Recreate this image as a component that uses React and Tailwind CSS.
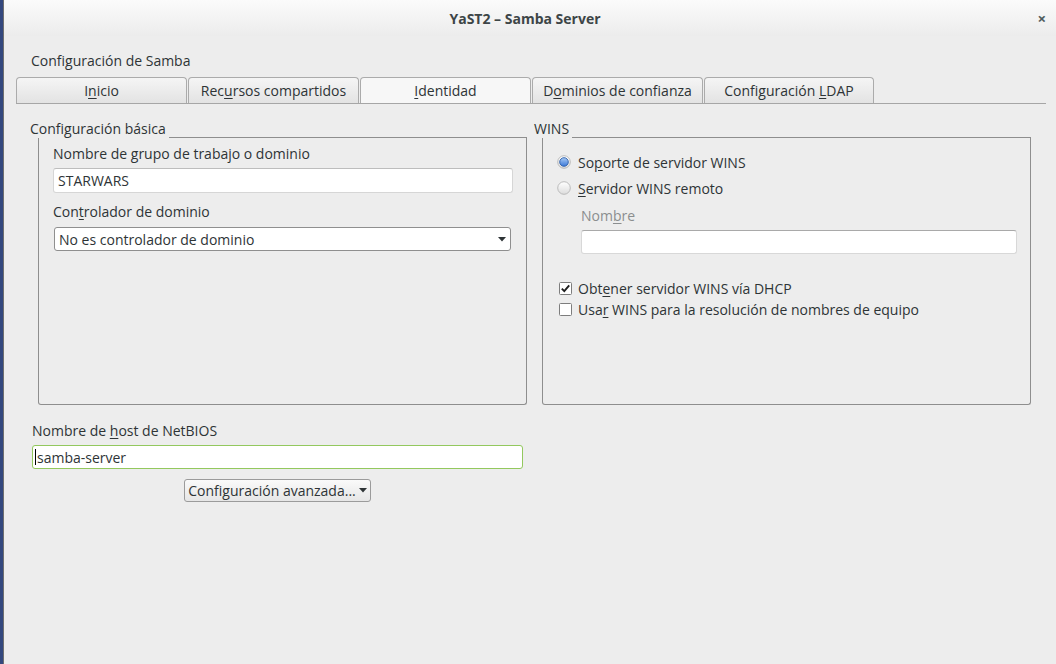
import React from 'react'

const font = { fontFamily: '"Open Sans", "Noto Sans", sans-serif' }

function Radio({ checked }) {
  return (
    <svg width="14" height="14" viewBox="0 0 14 14" className="shrink-0">
      <defs>
        <linearGradient id="rOff" x1="0" y1="0" x2="0" y2="1">
          <stop offset="0" stopColor="#ffffff" />
          <stop offset="1" stopColor="#dcdcdc" />
        </linearGradient>
        <linearGradient id="rOn" x1="0" y1="0" x2="0" y2="1">
          <stop offset="0" stopColor="#a9cbf5" />
          <stop offset="1" stopColor="#3b78d8" />
        </linearGradient>
      </defs>
      <circle cx="7" cy="7" r="6.3" fill="url(#rOff)" stroke="#b5b5b5" strokeWidth="0.9" />
      {checked && <circle cx="7" cy="7" r="4.3" fill="url(#rOn)" stroke="#2c5ea8" strokeWidth="0.9" />}
    </svg>
  )
}

function Check({ checked }) {
  return (
    <svg width="13" height="13" viewBox="0 0 13 13" className="shrink-0">
      <rect x="0.5" y="0.5" width="12" height="12" rx="1" fill="#ffffff" stroke="#7d7d7d" />
      {checked && <path d="M2.8 6.6 L5.3 9.1 L10.2 3.4" fill="none" stroke="#1e1e1e" strokeWidth="1.9" />}
    </svg>
  )
}

function Arrow() {
  return (
    <svg width="8" height="5" viewBox="0 0 8 5" className="shrink-0">
      <path d="M0 0 H8 L4 4.5 Z" fill="#2e3436" />
    </svg>
  )
}

function Frame({ label, children }) {
  return (
    <div className="w-[497px] flex flex-col">
      <div className="flex items-end h-[18px]">
        <span className="leading-[18px]">{label}</span>
        <div className="flex-1 h-px bg-[#8e8e8e] ml-[3px]" />
      </div>
      <div className="ml-[8px] h-[267px] border-l border-r border-b border-[#8e8e8e] rounded-b-[3px]">
        {children}
      </div>
    </div>
  )
}

const tabs = [
  ['I', 'n', 'icio'],
  ['Rec', 'u', 'rsos compartidos'],
  ['', 'I', 'dentidad'],
  ['D', 'o', 'minios de confianza'],
  ['Configuración ', 'L', 'DAP'],
]

export default function App() {
  return (
    <div className="w-[1056px] h-[664px] flex overflow-hidden text-[14px] text-[#2e3436]" style={font}>
      <div className="w-[3px] bg-[#34487e]" />
      <div className="flex-1 flex flex-col bg-[#ededed] border-l border-[#6f6f6f]">
        <div className="h-[36px] flex items-center bg-gradient-to-b from-[#fbfbfb] to-[#ececec]">
          <div className="flex-1" />
          <span className="font-bold text-[#3d4547]">YaST2 – Samba Server</span>
          <div className="flex-1 flex justify-end pr-[10px]">
            <span className="text-[15px] font-bold text-[#4f5b5e] leading-none">×</span>
          </div>
        </div>

        <div className="pl-[12px] pr-[10px] flex flex-col">
          <div className="mt-[15px] ml-[15px] leading-[20px]">Configuración de Samba</div>

          <div className="mt-[6px] flex items-end gap-[1px] border-b border-[#a6a6a6]">
            {tabs.map(([a, u, b], i) => (
              <div
                key={i}
                className={`${i === 4 ? 'w-[170px]' : 'w-[171px]'} h-[26px] flex items-center justify-center border border-b-0 border-[#ababab] rounded-t-[4px] ${
                  i === 2 ? 'bg-[#f7f7f7]' : 'bg-gradient-to-b from-[#f5f5f5] to-[#e3e3e3]'
                }`}
              >
                <span>
                  {a}
                  <u className="underline-offset-2">{u}</u>
                  {b}
                </span>
              </div>
            ))}
          </div>

          <div className="mt-[16px] ml-[14px] flex gap-[7px]">
            <Frame label="Configuración básica">
              <div className="pl-[14px] pt-[7px] flex flex-col">
                <div className="leading-[18px]">
                  Nombre de <u className="underline-offset-2">g</u>rupo de trabajo o dominio
                </div>
                <div className="mt-[5px] w-[460px] h-[25px] bg-white border border-[#d6d6d6] border-t-[#bdbdbd] rounded-[3px] flex items-center pl-[4px]">
                  STARWARS
                </div>
                <div className="mt-[10px] leading-[18px]">
                  Con<u className="underline-offset-2">t</u>rolador de dominio
                </div>
                <div className="mt-[6px] ml-px w-[457px] h-[24px] bg-white border border-[#8f8f8f] rounded-[3px] flex items-center pl-[4px] pr-[4px]">
                  <span className="flex-1">No es controlador de dominio</span>
                  <Arrow />
                </div>
              </div>
            </Frame>

            <Frame label="WINS">
              <div className="pl-[14px] pt-[14px] flex flex-col">
                <div className="h-[20px] flex items-center gap-[7px]">
                  <Radio checked />
                  <span>
                    So<u className="underline-offset-2">p</u>orte de servidor WINS
                  </span>
                </div>
                <div className="mt-[6px] h-[20px] flex items-center gap-[7px]">
                  <Radio />
                  <span>
                    <u className="underline-offset-2">S</u>ervidor WINS remoto
                  </span>
                </div>
                <div className="mt-[9px] ml-[24px] leading-[18px] text-[#8b8e8f]">
                  Nom<u className="underline-offset-2">b</u>re
                </div>
                <div className="mt-[5px] ml-[24px] w-[436px] h-[24px] bg-white border border-[#d8d8d8] border-t-[#a9a9a9] rounded-[3px]" />
                <div className="mt-[24px] h-[20px] flex items-center gap-[6px] pl-[2px]">
                  <Check checked />
                  <span>
                    Obt<u className="underline-offset-2">e</u>ner servidor WINS vía DHCP
                  </span>
                </div>
                <div className="mt-px h-[20px] flex items-center gap-[6px] pl-[2px]">
                  <Check />
                  <span>
                    Usa<u className="underline-offset-2">r</u> WINS para la resolución de nombres de equipo
                  </span>
                </div>
              </div>
            </Frame>
          </div>

          <div className="mt-[17px] ml-[16px] leading-[18px]">
            Nombre de <u className="underline-offset-2">h</u>ost de NetBIOS
          </div>
          <div className="mt-[5px] ml-[16px] w-[491px] h-[24px] bg-white border border-[#93c85e] rounded-[3px] flex items-center pl-[2px]">
            <div className="w-px h-[16px] bg-black mr-px" />
            <span>samba-server</span>
          </div>
          <div className="mt-[10px] ml-[168px] w-[187px] h-[23px] border border-[#9b9b9b] rounded-[3px] bg-gradient-to-b from-[#fafafa] to-[#e6e6e6] flex items-center justify-center gap-[3px]">
            <span>Configuración avanzada...</span>
            <Arrow />
          </div>
        </div>
      </div>
    </div>
  )
}
